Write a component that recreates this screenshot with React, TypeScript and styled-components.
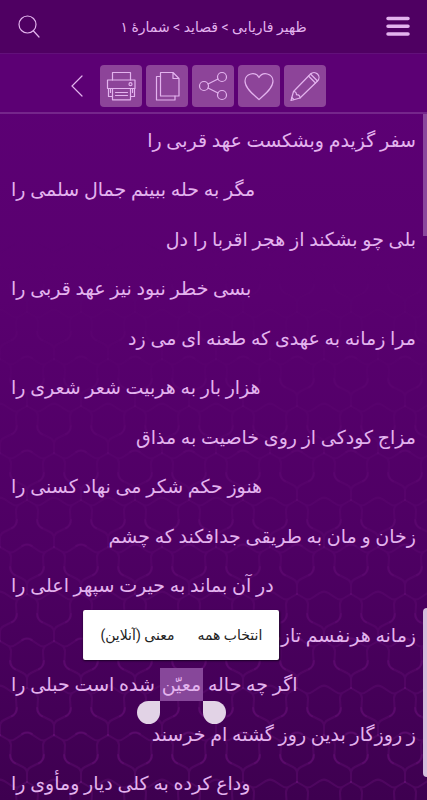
import React from "react";
import styled, { createGlobalStyle } from "styled-components";

const ink = "#e3b3ee";

const GlobalStyle = createGlobalStyle`
  * { box-sizing: border-box; }
  body { margin: 0; background: #3f0052; }
  button { font: inherit; color: inherit; }
`;

const Page = styled.div`
  direction: rtl;
  height: 100vh;
  display: flex;
  flex-direction: column;
  position: relative;
  overflow: hidden;
  color: ${ink};
  font-family: Roboto, "DejaVu Sans", sans-serif;
  background: linear-gradient(#5c0074 100px, #59006f 300px, #4e0063 550px, #3e0050);
`;

const Backdrop = styled.svg`
  position: absolute;
  inset: 0;
  width: 100%;
  height: 100%;
`;

const Header = styled.header`
  flex: none;
  height: 54px;
  padding: 0 10px;
  display: flex;
  align-items: center;
  justify-content: space-between;
  position: relative;
  background: #4f0062;
  border-bottom: 1px solid #62107a;
`;

const PlainButton = styled.button`
  display: flex;
  align-items: center;
  justify-content: center;
  width: 38px;
  height: 40px;
  padding: 0;
  border: 0;
  background: none;
`;

const Title = styled.h1`
  margin: 0;
  font-size: 14px;
  line-height: 24px;
  font-weight: 400;
`;

const Toolbar = styled.div`
  flex: none;
  height: 60px;
  padding: 6px 101px 0 0;
  display: flex;
  align-items: center;
  gap: 4px;
  position: relative;
  background: #5c0074;
  border-bottom: 2px solid #75268b;
`;

const Tool = styled.button`
  flex: none;
  width: 42px;
  height: 42px;
  padding: 0;
  display: flex;
  align-items: center;
  justify-content: center;
  border: 0;
  border-radius: 4px;
  background: #8d4499;
`;

const Poem = styled.main`
  flex: 1;
  min-height: 0;
  padding: 2px 11px 0;
  display: flex;
  flex-direction: column;
  position: relative;
`;

const Verse = styled.p<{ $second?: boolean }>`
  flex: none;
  margin: 0;
  height: 49px;
  line-height: 49px;
  font-size: 19px;
  white-space: nowrap;
  text-align: ${(p) => (p.$second ? "left" : "right")};
`;

const Couplet = styled.div`
  & + & { margin-top: 1px; }
`;

const Selected = styled.mark`
  display: inline-block;
  position: relative;
  height: 33px;
  padding: 0 2px;
  line-height: 33px;
  color: inherit;
  background: #87479a;
`;

const Handle = styled.span<{ $end?: boolean }>`
  position: absolute;
  z-index: 1;
  top: 100%;
  ${(p) => (p.$end ? "right: 100%;" : "left: 100%;")}
  width: 23px;
  height: 23px;
  border-radius: ${(p) => (p.$end ? "50% 0 50% 50%" : "0 50% 50% 50%")};
  background: #e2d3e6;
`;

const Menu = styled.span`
  position: absolute;
  z-index: 2;
  bottom: calc(100% + 8px);
  left: 50%;
  transform: translateX(-50%);
  height: 50px;
  padding: 0 17px;
  display: flex;
  align-items: center;
  gap: 23px;
  border-radius: 2px;
  background: #fff;
  color: #222;
  box-shadow: 0 1px 2px #1c0026;
`;

const MenuItem = styled.button`
  padding: 0;
  border: 0;
  background: none;
  font-size: 14px;
  line-height: 24px;
  white-space: nowrap;
`;

const ScrollThumb = styled.span`
  position: absolute;
  top: 0;
  right: 0;
  width: 4px;
  height: 122px;
  background: #8b479c;
`;

const EdgeHandle = styled.span`
  position: absolute;
  right: 0;
  top: 608px;
  width: 4px;
  height: 169px;
  border-radius: 4px 0 0 4px;
  background: #d5bfdc;
`;

const Icon = ({ children }: { children: React.ReactNode }) => (
  <svg width="32" height="32" viewBox="0 0 32 32" fill="none" stroke={ink} strokeWidth="1.2" strokeLinecap="round" strokeLinejoin="round" aria-hidden="true">
    {children}
  </svg>
);

const tools = [
  {
    label: "ویرایش",
    art: (
      <>
        <path d="M2 30.500 4.500 21.500 21.500 4c2-2 5-2 7 0s2 5 0 7L11 28z" />
        <path d="M4.500 21.500c2 0 3 1 3 3.200 2.200 0 3.500 1.300 3.500 3.300M19.500 6l7 7M21.500 4l7 7M2.800 27.500l2 2" />
      </>
    ),
  },
  { label: "علاقه‌مندی", art: <path d="M16 29.500C11 25 2 18.500 2 11a7.500 7.500 0 0 1 14-3.500A7.500 7.500 0 0 1 30 11c0 7.500-9 14-14 18.500z" /> },
  {
    label: "اشتراک‌گذاری",
    art: (
      <>
        <circle cx="7" cy="16" r="4.500" />
        <circle cx="25" cy="7" r="4.500" />
        <circle cx="25" cy="25" r="4.500" />
        <path d="m11 14 10-5M11 18l10 5" />
      </>
    ),
  },
  {
    label: "رونوشت",
    art: (
      <>
        <path d="M9.500 2.500h12.500l6 6V26H9.500zM22 2.500v6h6" />
        <path d="M9.500 6.500h-4V30H24v-4" />
      </>
    ),
  },
  {
    label: "چاپ",
    art: (
      <>
        <path d="M7.500 10V2.500h18V10M7.500 26.500H3.500V18.500M25.500 26.500h4V18.500" />
        <path d="M2.500 10h27.500v8.500H2.500z" />
        <circle cx="25.500" cy="14.200" r="1.500" />
        <path d="M7.500 18.500h18v11.300h-18zM10.500 22.500h12M10.500 25.500h12M5.500 18.500v4M27.500 18.500v4" />
      </>
    ),
  },
];

const verses = [
  "سفر گزیدم وبشکست عهد قربی را",
  "مگر به حله ببینم جمال سلمی را",
  "بلی چو بشکند از هجر اقربا را دل",
  "بسی خطر نبود نیز عهد قربی را",
  "مرا زمانه به عهدی که طعنه ای می زد",
  "هزار بار به هربیت شعر شعری را",
  "مزاج کودکی از روی خاصیت به مذاق",
  "هنوز حکم شکر می نهاد کسنی را",
  "زخان و مان به طریقی جدافکند که چشم",
  "در آن بماند به حیرت سپهر اعلی را",
  "زمانه هرنفسم تازه",
  "اگر چه حاله معیّن شده است حبلی را",
  "ز روزگار بدین روز گشته ام خرسند",
  "وداع کرده به کلی دیار ومأوی را",
];

const couplets = verses.filter((_, i) => i % 2 === 0).map((first, i) => [first, verses[i * 2 + 1]]);
const selection = "معیّن";

const SelectedWord = () => (
  <Selected>
    {selection}
    <Handle />
    <Handle $end />
    <Menu role="menu">
      <MenuItem role="menuitem">انتخاب همه</MenuItem>
      <MenuItem role="menuitem">معنی (آنلاین)</MenuItem>
    </Menu>
  </Selected>
);

const VerseText = ({ text }: { text: string }) => {
  const [before, after] = text.split(selection);
  return after === undefined ? <>{text}</> : <>{before}<SelectedWord />{after}</>;
};

export default function App() {
  return (
    <Page lang="fa">
      <GlobalStyle />
      <Backdrop aria-hidden="true">
        <defs>
          <linearGradient id="fade" x1="0" y1="0" x2="0" y2="1">
            <stop offset="0.3" stopColor="#fff" stopOpacity="0" />
            <stop offset="1" stopColor="#fff" />
          </linearGradient>
          <mask id="lower"><rect width="100%" height="100%" fill="url(#fade)" /></mask>
          <g id="arm">
            <path d="M0 0v-9q0-4 4-6l8-4q5-3 5-8M0-9q0-4-4-6l-8-4q-5-3-5-8" />
          </g>
          <g id="knot">
            <use href="#arm" />
            <use href="#arm" transform="rotate(120)" />
            <use href="#arm" transform="rotate(240)" />
          </g>
          <pattern id="knots" width="54" height="94" patternUnits="userSpaceOnUse">
            <g fill="none" stroke="#8a1b96" strokeOpacity="0.22" strokeWidth="2" strokeLinecap="round">
              <use href="#knot" x="27" y="30" />
              <use href="#knot" x="0" y="77" />
              <use href="#knot" x="54" y="77" />
              <use href="#knot" x="0" y="-17" />
              <use href="#knot" x="54" y="-17" />
            </g>
          </pattern>
        </defs>
        <rect width="100%" height="100%" fill="url(#knots)" mask="url(#lower)" />
      </Backdrop>
      <Header>
        <PlainButton aria-label="فهرست">
          <svg width="24" height="22" viewBox="0 0 24 22" stroke={ink} strokeWidth="3.500" strokeLinecap="round" aria-hidden="true">
            <path d="M2 2.500h20M2 10.300h20M2 18h20" />
          </svg>
        </PlainButton>
        <Title>ظهیر فاریابی &gt; قصاید &gt; شمارهٔ ۱</Title>
        <PlainButton aria-label="جستجو">
          <svg width="22" height="24" viewBox="0 0 22 24" fill="none" stroke={ink} strokeWidth="1.200" strokeLinecap="round" aria-hidden="true">
            <circle cx="9.500" cy="9.500" r="8.500" />
            <path d="m15.500 16 5.500 6" />
          </svg>
        </PlainButton>
      </Header>
      <Toolbar role="toolbar">
        {tools.map((t) => (
          <Tool key={t.label} aria-label={t.label}><Icon>{t.art}</Icon></Tool>
        ))}
        <PlainButton aria-label="بعدی">
          <svg width="12" height="22" viewBox="0 0 12 22" fill="none" stroke={ink} strokeWidth="1.200" strokeLinecap="round" aria-hidden="true">
            <path d="M11 1 1 11l10 10" />
          </svg>
        </PlainButton>
      </Toolbar>
      <Poem>
        {couplets.map(([first, second]) => (
          <Couplet key={first}>
            <Verse><VerseText text={first} /></Verse>
            <Verse $second><VerseText text={second} /></Verse>
          </Couplet>
        ))}
        <ScrollThumb />
      </Poem>
      <EdgeHandle />
    </Page>
  );
}
